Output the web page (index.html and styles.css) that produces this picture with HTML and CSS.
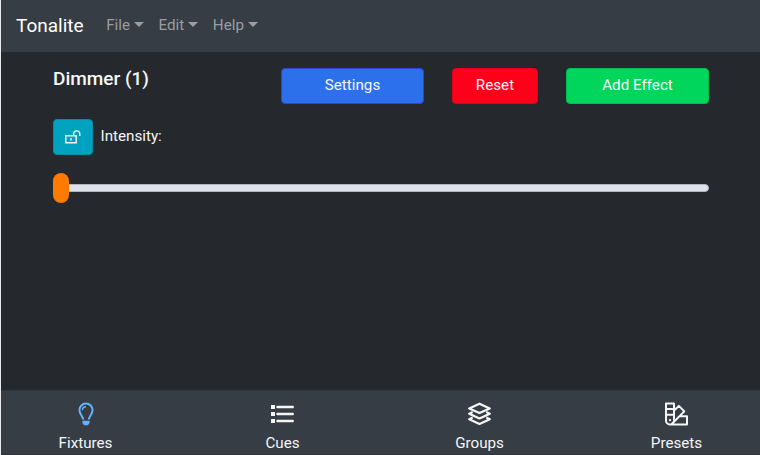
FILE: index.html
```html
<!DOCTYPE html>
<html lang="en">
<head>
<meta charset="utf-8">
<title>Tonalite</title>
<link rel="stylesheet" href="styles.css">
</head>
<body>
<div class="app">
  <nav class="navbar">
    <span class="brand">Tonalite</span>
    <span class="menu">File</span>
    <span class="menu">Edit</span>
    <span class="menu">Help</span>
  </nav>
  <main class="content">
    <header class="toolbar">
      <h1 class="title">Dimmer (1)</h1>
      <button class="btn settings">Settings</button>
      <button class="btn reset">Reset</button>
      <button class="btn effect">Add Effect</button>
    </header>
    <div class="parameter">
      <button class="btn lock" aria-label="Unlock">
        <svg width="16" height="14" viewBox="0 0 16 14" fill="none" stroke="currentColor" stroke-width="1.4"><path d="M.8 5.7h10.4v7.1H.8zM8.6 5.7V4a3.1 3.1 0 0 1 6.2 0v2"/><path d="M6 8v2.6"/></svg>
      </button>
      <span class="label">Intensity:</span>
    </div>
    <div class="slider"><div class="thumb"></div></div>
  </main>
  <nav class="tabs">
    <div class="tab active">
      <svg width="24" height="24" viewBox="0 0 24 24"><path fill="none" stroke="currentColor" stroke-width="2" d="M9.2 17.6c0-3-3.8-5.2-3.8-9.5a6.6 6.6 0 0 1 13.2 0c0 4.3-3.8 6.5-3.8 9.5"/><path fill="none" stroke="currentColor" stroke-width="1.4" d="M8.4 8.2c0-2.2 1.4-3.5 3.6-3.5"/><path fill="currentColor" d="M8.4 18.7h7.2v2.3L13.8 23.2h-3.6L8.4 21z"/></svg>
      <span>Fixtures</span>
    </div>
    <div class="tab">
      <svg width="24" height="24" viewBox="0 0 24 24" fill="currentColor"><path d="M1 3h4v4H1zM1 10h4v4H1zM1 17h4v4H1z"/><rect x="6.4" y="3.7" width="17.4" height="2.6" rx=".7"/><rect x="6.4" y="10.7" width="17.4" height="2.6" rx=".7"/><rect x="6.4" y="17.7" width="17.4" height="2.6" rx=".7"/></svg>
      <span>Cues</span>
    </div>
    <div class="tab">
      <svg width="24" height="24" viewBox="0 0 24 24" fill="none" stroke="currentColor" stroke-width="2.2" stroke-linejoin="round"><path d="M12.5 1.7 22.8 6.4 12.5 11.1 2.2 6.4z"/><path d="m5.7 10.1-3.5 1.6 10.3 4.8 10.3-4.8-3.5-1.6M5.7 15.6l-3.5 1.6L12.5 22l10.3-4.8-3.5-1.6"/></svg>
      <span>Groups</span>
    </div>
    <div class="tab">
      <svg width="24" height="24" viewBox="0 0 24 24" fill="none" stroke="currentColor" stroke-width="2" stroke-linejoin="round"><path d="M2 1.5h8v17a4 4 0 0 1-8 0zM2 7h8M2 12.7h8M10 8.5l4.9-4.6 5.4 5.5L8 21.8M16.1 14.2H23v8.3H6"/><circle cx="6" cy="18.2" r="1.1" fill="currentColor" stroke="none"/></svg>
      <span>Presets</span>
    </div>
  </nav>
</div>
</body>
</html>
```
FILE: styles.css
```css
* { box-sizing: border-box; }
body { margin: 0; background: #e9eaeb; color: #f5f6f7; font: 15.2px/22px Roboto, sans-serif; }
.app { height: 455px; margin-left: 1px; display: flex; flex-direction: column; background: #25292d; }
.navbar { height: 52px; padding: 0 15px 2px; display: flex; align-items: center; background: #363d44; }
.brand { font-size: 19px; margin-right: 22.5px; padding-top: 2px; color: #fff; }
.menu { color: #9a9da1; margin-right: 14.7px; display: flex; align-items: center; }
.menu::after { content: ""; margin: -2px 0 0 3.9px; border: 5px solid transparent; border-top-color: currentColor; border-bottom: 0; }
.content { flex: 1; padding: 15.5px 51px 0 52px; }
.toolbar { display: grid; grid-template-columns: 200px 143px 86px 143px; column-gap: 28px; }
.title { margin: 0; font-size: 19px; font-weight: 500; line-height: 22px; }
.btn { height: 36px; border: 1px solid; border-radius: 4px; padding: 0 0 1px; color: #f5f6f7; font: 15.2px/22px Roboto, sans-serif; display: flex; align-items: center; justify-content: center; }
.settings { background: #2d70eb; border-color: #3142db; }
.reset { background: #ff001b; border-color: #e70018; }
.effect { background: #00d65c; border-color: #00bd50; }
.parameter { display: flex; align-items: center; margin-top: 15px; }
.lock { width: 40px; padding: 0; background: #00a3bf; border-color: #008fa8; margin-right: 7.5px; }
.label { margin-top: -2px; }
.slider { height: 8px; margin-top: 29.5px; border: 1px solid #b2b5b9; border-radius: 4px; background: #dee2e9; display: flex; align-items: center; }
.thumb { width: 16px; height: 30px; flex: none; margin-left: -1px; border-radius: 8px; background: #ff7b00; }
.tabs { height: 65px; background: #363d44; border-top: 1px solid #31373d; border-bottom: 1px solid #2d3339; display: flex; }
.tab { width: 197px; flex: none; display: flex; flex-direction: column; align-items: center; padding-top: 11px; }
.tab:first-child { width: 169px; }
.tab:nth-child(2) { width: 225px; }
.tab:nth-child(3) { width: 169px; }
.tab:nth-child(4) { width: 225px; }
.tab svg { margin: 0 1px 6px 0; }
.tab.active svg { color: #65b0ff; margin-right: 0; }
```
